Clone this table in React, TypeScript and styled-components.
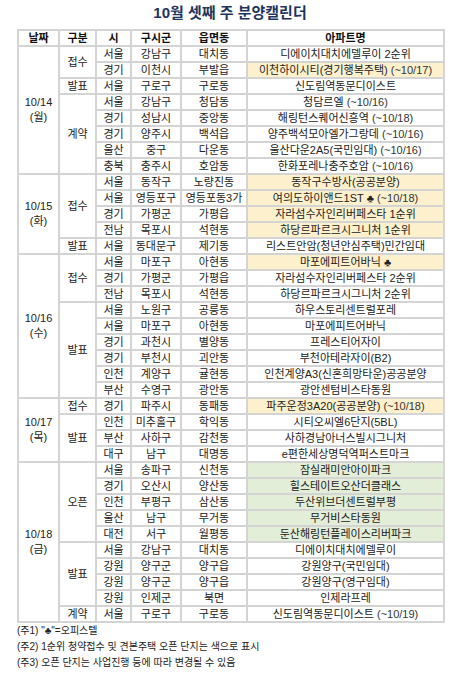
import React from 'react';
import styled, { createGlobalStyle } from 'styled-components';

type Tone = 'yellow' | 'green' | undefined;

interface Row {
	si: string;
	gu: string;
	dong: string;
	apt: string;
	until?: string;
	tone?: Tone;
}

interface Group {
	kind: string;
	rows: Row[];
}

interface Day {
	date: string;
	weekday: string;
	groups: Group[];
}

const days: Day[] = [
	{
		date: '10/14',
		weekday: '(월)',
		groups: [
			{
				kind: '접수',
				rows: [
					{ si: '서울', gu: '강남구', dong: '대치동', apt: '디에이치대치에델루이 2순위' },
					{ si: '경기', gu: '이천시', dong: '부발읍', apt: '이천하이시티(경기행복주택)', until: '(~10/17)', tone: 'yellow' },
				],
			},
			{
				kind: '발표',
				rows: [{ si: '서울', gu: '구로구', dong: '구로동', apt: '신도림역동문디이스트' }],
			},
			{
				kind: '계약',
				rows: [
					{ si: '서울', gu: '강남구', dong: '청담동', apt: '청담르엘', until: '(~10/16)' },
					{ si: '경기', gu: '성남시', dong: '중앙동', apt: '해링턴스퀘어신흥역', until: '(~10/18)' },
					{ si: '경기', gu: '양주시', dong: '백석읍', apt: '양주백석모아엘가그랑데', until: '(~10/16)' },
					{ si: '울산', gu: '중구', dong: '다운동', apt: '울산다운2A5(국민임대)', until: '(~10/16)' },
					{ si: '충북', gu: '충주시', dong: '호암동', apt: '한화포레나충주호암', until: '(~10/16)' },
				],
			},
		],
	},
	{
		date: '10/15',
		weekday: '(화)',
		groups: [
			{
				kind: '접수',
				rows: [
					{ si: '서울', gu: '동작구', dong: '노량진동', apt: '동작구수방사(공공분양)', tone: 'yellow' },
					{ si: '서울', gu: '영등포구', dong: '영등포동3가', apt: '여의도하이앤드1ST ♣', until: '(~10/18)', tone: 'yellow' },
					{ si: '경기', gu: '가평군', dong: '가평읍', apt: '자라섬수자인리버페스타 1순위', tone: 'yellow' },
					{ si: '전남', gu: '목포시', dong: '석현동', apt: '하당르파르크시그니처 1순위', tone: 'yellow' },
				],
			},
			{
				kind: '발표',
				rows: [{ si: '서울', gu: '동대문구', dong: '제기동', apt: '리스트안암(청년안심주택)민간임대' }],
			},
		],
	},
	{
		date: '10/16',
		weekday: '(수)',
		groups: [
			{
				kind: '접수',
				rows: [
					{ si: '서울', gu: '마포구', dong: '아현동', apt: '마포에피트어바닉 ♣', tone: 'yellow' },
					{ si: '경기', gu: '가평군', dong: '가평읍', apt: '자라섬수자인리버페스타 2순위' },
					{ si: '전남', gu: '목포시', dong: '석현동', apt: '하당르파르크시그니처 2순위' },
				],
			},
			{
				kind: '발표',
				rows: [
					{ si: '서울', gu: '노원구', dong: '공릉동', apt: '하우스토리센트럴포레' },
					{ si: '서울', gu: '마포구', dong: '아현동', apt: '마포에피트어바닉' },
					{ si: '경기', gu: '과천시', dong: '별양동', apt: '프레스티어자이' },
					{ si: '경기', gu: '부천시', dong: '괴안동', apt: '부천아테라자이(B2)' },
					{ si: '인천', gu: '계양구', dong: '귤현동', apt: '인천계양A3(신혼희망타운)공공분양' },
					{ si: '부산', gu: '수영구', dong: '광안동', apt: '광안센텀비스타동원' },
				],
			},
		],
	},
	{
		date: '10/17',
		weekday: '(목)',
		groups: [
			{
				kind: '접수',
				rows: [{ si: '경기', gu: '파주시', dong: '동패동', apt: '파주운정3A20(공공분양)', until: '(~10/18)', tone: 'yellow' }],
			},
			{
				kind: '발표',
				rows: [
					{ si: '인천', gu: '미추홀구', dong: '학익동', apt: '시티오씨엘6단지(5BL)' },
					{ si: '부산', gu: '사하구', dong: '감천동', apt: '사하경남아너스빌시그니처' },
					{ si: '대구', gu: '남구', dong: '대명동', apt: 'e편한세상명덕역퍼스트마크' },
				],
			},
		],
	},
	{
		date: '10/18',
		weekday: '(금)',
		groups: [
			{
				kind: '오픈',
				rows: [
					{ si: '서울', gu: '송파구', dong: '신천동', apt: '잠실래미안아이파크', tone: 'green' },
					{ si: '경기', gu: '오산시', dong: '양산동', apt: '힐스테이트오산더클래스', tone: 'green' },
					{ si: '인천', gu: '부평구', dong: '삼산동', apt: '두산위브더센트럴부평', tone: 'green' },
					{ si: '울산', gu: '남구', dong: '무거동', apt: '무거비스타동원', tone: 'green' },
					{ si: '대전', gu: '서구', dong: '월평동', apt: '둔산해링턴플레이스리버파크', tone: 'green' },
				],
			},
			{
				kind: '발표',
				rows: [
					{ si: '서울', gu: '강남구', dong: '대치동', apt: '디에이치대치에델루이' },
					{ si: '강원', gu: '양구군', dong: '양구읍', apt: '강원양구(국민임대)' },
					{ si: '강원', gu: '양구군', dong: '양구읍', apt: '강원양구(영구임대)' },
					{ si: '강원', gu: '인제군', dong: '북면', apt: '인제라프레' },
				],
			},
			{
				kind: '계약',
				rows: [{ si: '서울', gu: '구로구', dong: '구로동', apt: '신도림역동문디이스트', until: '(~10/19)' }],
			},
		],
	},
];

const notes = [
	'(주1) "♣"=오피스텔',
	'(주2) 1순위 청약접수 및 견본주택 오픈 단지는 색으로  표시',
	'(주3) 오픈 단지는 사업진행 등에 따라 변경될 수 있음',
];

const GlobalStyle = createGlobalStyle`
	body {
		margin: 0;
		background: #ffffff;
		font-family: 'Liberation Sans', 'Noto Sans CJK KR', sans-serif;
		color: #222222;
	}
`;

const Page = styled('div')({
	width: '461px',
	padding: '4px 0 0 17px',
	boxSizing: 'border-box',
});

const Title = styled('h1')({
	margin: '0 0 7px',
	width: '426px',
	textAlign: 'center',
	fontSize: '15px',
	lineHeight: '18px',
	fontWeight: 'bold',
	color: '#1c3560',
});

const Table = styled('table')({
	width: '426px',
	borderCollapse: 'collapse',
	tableLayout: 'fixed',
	border: '2px solid #d4d4d4',
});

const HeadCell = styled('th')({
	padding: 0,
	fontSize: '11px',
	lineHeight: '14px',
	fontWeight: 600,
	color: '#111111',
	border: '2px solid #d4d4d4',
});

const Cell = styled.td<{ $tone?: Tone }>`
	padding: 0;
	font-size: 11px;
	line-height: 14px;
	text-align: center;
	white-space: nowrap;
	border: 2px solid #d4d4d4;
	background: ${(p) =>
		p.$tone === 'yellow' ? '#fdf0cd' : p.$tone === 'green' ? '#e2eed8' : '#ffffff'};
`;

// fixed-height line so every row keeps a 16px pitch
const Line = styled('span')({
	display: 'block',
	height: '14px',
	lineHeight: '14px',
	overflow: 'hidden',
});

const DateText = styled('span')({
	display: 'block',
	height: '15px',
	lineHeight: '15px',
});

const Until = styled('span')({
	fontSize: '11px',
	color: '#333333',
});

const Notes = styled('div')({
	display: 'flex',
	flexDirection: 'column',
	gap: '4px',
	marginTop: '2px',
	fontSize: '10px',
	lineHeight: '12px',
	color: '#222222',
});

const App = () => {
	return (
		<Page>
			<GlobalStyle />
			<Title>10월 셋째 주 분양캘린더</Title>
			<Table>
				<colgroup>
					<col style={{ width: 41 }} />
					<col style={{ width: 37 }} />
					<col style={{ width: 35 }} />
					<col style={{ width: 50 }} />
					<col style={{ width: 66 }} />
					<col style={{ width: 197 }} />
				</colgroup>
				<thead>
					<tr>
						{['날짜', '구분', '시', '구시군', '읍면동', '아파트명'].map((h) => (
							<HeadCell key={h}>
								<Line>{h}</Line>
							</HeadCell>
						))}
					</tr>
				</thead>
				<tbody>
					{days.map((day) => {
						const dayRows = day.groups.reduce((n, g) => n + g.rows.length, 0);
						return day.groups.map((group, gi) =>
							group.rows.map((row, ri) => (
								<tr key={`${day.date}-${gi}-${ri}`}>
									{gi === 0 && ri === 0 && (
										<Cell rowSpan={dayRows}>
											<DateText>{day.date}</DateText>
											<DateText>{day.weekday}</DateText>
										</Cell>
									)}
									{ri === 0 && (
										<Cell rowSpan={group.rows.length}>
											<Line>{group.kind}</Line>
										</Cell>
									)}
									<Cell>
										<Line>{row.si}</Line>
									</Cell>
									<Cell>
										<Line>{row.gu}</Line>
									</Cell>
									<Cell>
										<Line>{row.dong}</Line>
									</Cell>
									<Cell $tone={row.tone}>
										<Line>
											{row.apt}
											{row.until && <Until> {row.until}</Until>}
										</Line>
									</Cell>
								</tr>
							))
						);
					})}
				</tbody>
			</Table>
			<Notes>
				{notes.map((n) => (
					<span key={n}>{n}</span>
				))}
			</Notes>
		</Page>
	);
};

export default App;
